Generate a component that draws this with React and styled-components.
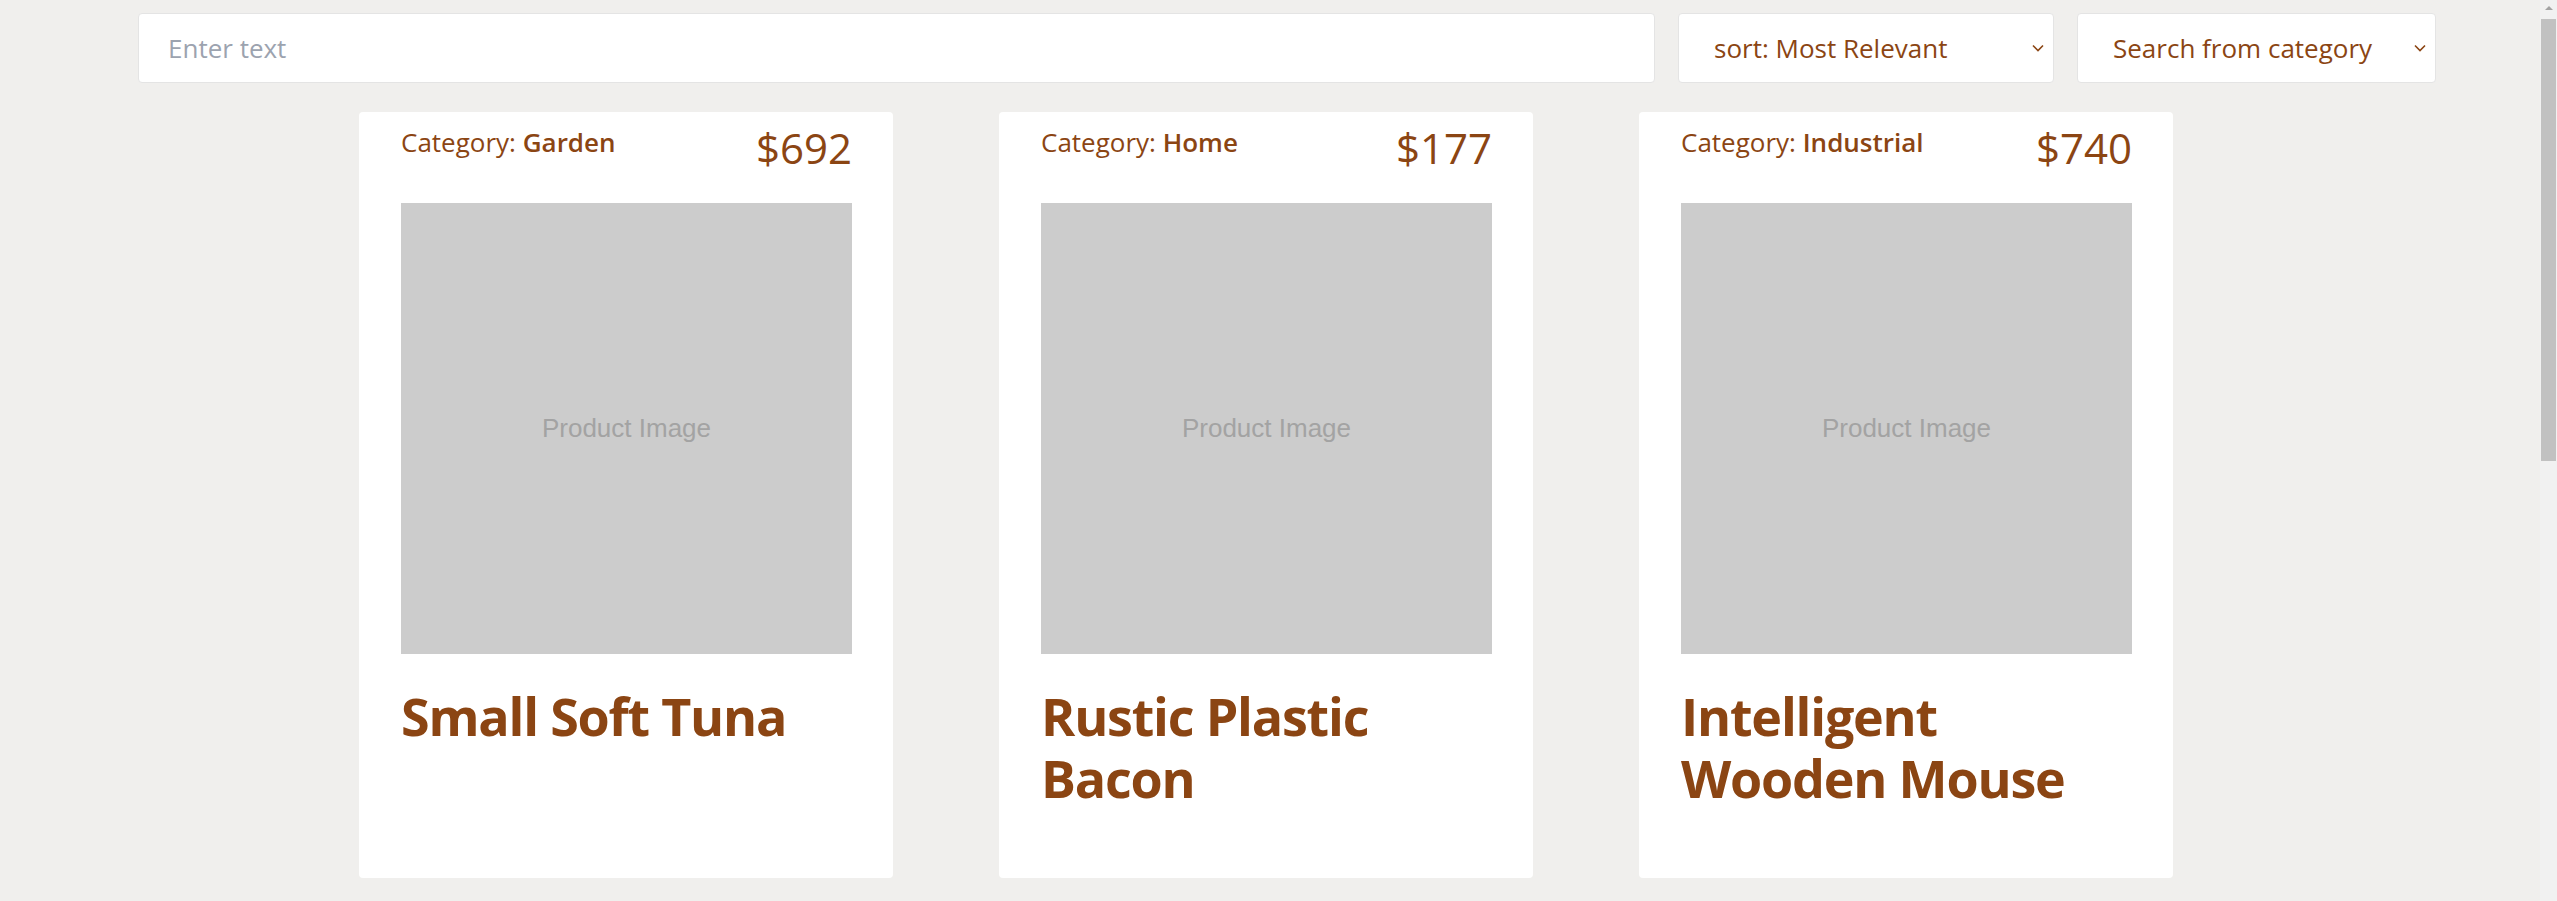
import styled, { createGlobalStyle } from "styled-components"

const GlobalStyle = createGlobalStyle`
  html, body {
    margin: 0;
    padding: 0;
    background: #f0efed;
    font-family: "Open Sans", "Noto Sans", sans-serif;
    color: #8b4513;
    overflow: hidden;
  }
  * {
    box-sizing: border-box;
  }
`

const products = [
  { id: 1, category: "Garden", price: 692, name: "Small Soft Tuna" },
  { id: 2, category: "Home", price: 177, name: "Rustic Plastic Bacon" },
  { id: 3, category: "Industrial", price: 740, name: "Intelligent Wooden Mouse" },
]

const PageWrapper = styled.div`
  padding: 13px 17px 60px 0;
`

const SearchBar = styled.div`
  display: flex;
  gap: 23px;
  padding-left: 138px;
`

const SearchInput = styled.input`
  width: 1517px;
  height: 70px;
  padding: 0 29px;
  border: 1px solid #e4e4e4;
  border-radius: 4px;
  background: #fff;
  font-family: inherit;
  font-size: 26px;
  color: #8b4513;
  outline: none;

  &::placeholder {
    color: #9ca3af;
  }
`

const SelectWrap = styled.div`
  position: relative;
  width: ${(p) => p.$width}px;
  height: 70px;

  svg {
    position: absolute;
    right: 8px;
    top: 30px;
    pointer-events: none;
  }
`

const Select = styled.select`
  appearance: none;
  width: 100%;
  height: 100%;
  padding: 0 30px 0 35px;
  border: 1px solid #e4e4e4;
  border-radius: 4px;
  background: #fff;
  font-family: inherit;
  font-size: 26px;
  color: #8b4513;
  outline: none;
`

const CardGrid = styled.div`
  display: grid;
  grid-template-columns: repeat(3, 534px);
  column-gap: 106px;
  margin: 29px 0 0 359px;
`

const Card = styled.div`
  height: 766px;
  padding: 15px 41px 0 42px;
  background: #fff;
  border-radius: 4px;
`

const CardHeader = styled.div`
  display: flex;
  justify-content: space-between;
  align-items: flex-start;
`

const Category = styled.div`
  margin-top: 2px;
  font-size: 26px;
  line-height: 26px;

  b {
    font-weight: 600;
  }
`

const Price = styled.div`
  font-size: 42px;
  line-height: 42px;
`

const ImageBox = styled.div`
  display: flex;
  align-items: center;
  justify-content: center;
  width: 100%;
  aspect-ratio: 1;
  margin-top: 34px;
  background: #cccccc;
  font-family: "Liberation Sans", Arial, sans-serif;
  font-size: 26px;
  color: #a3a3a3;
`

const Title = styled.h2`
  margin: 31px 0 0;
  font-size: 52px;
  letter-spacing: -1.2px;
  line-height: 62px;
  font-weight: 700;
`

const ScrollTrack = styled.div`
  position: fixed;
  top: 0;
  right: 0;
  width: 17px;
  height: 100vh;
  display: flex;
  flex-direction: column;
  align-items: center;
  background: #f1f1f1;
`

const ScrollArrow = styled.div`
  width: 0;
  height: 0;
  margin: 6px 0 5px;
  border-left: 4px solid transparent;
  border-right: 4px solid transparent;
  border-bottom: 4px solid #a3a3a3;
`

const ScrollThumb = styled.div`
  width: 15px;
  height: 442px;
  margin-top: 4px;
  background: #c1c1c1;
`

const Chevron = () => (
  <svg width="16" height="10" viewBox="0 0 16 10" fill="none">
    <path d="M3 2.5 L8 7.5 L13 2.5" stroke="#8b4513" strokeWidth="1.6" />
  </svg>
)

const App = () => {
  return (
    <PageWrapper>
      <GlobalStyle />
      <SearchBar>
        <SearchInput placeholder="Enter text" />
        <SelectWrap $width={376}>
          <Select defaultValue="relevant">
            <option value="relevant">sort: Most Relevant</option>
            <option value="low">sort: Price Low to High</option>
            <option value="high">sort: Price High to Low</option>
          </Select>
          <Chevron />
        </SelectWrap>
        <SelectWrap $width={359}>
          <Select defaultValue="">
            <option value="">Search from category</option>
            <option value="garden">Garden</option>
            <option value="home">Home</option>
            <option value="industrial">Industrial</option>
          </Select>
          <Chevron />
        </SelectWrap>
      </SearchBar>
      <CardGrid>
        {products.map((item) => (
          <Card key={item.id}>
            <CardHeader>
              <Category>
                Category: <b>{item.category}</b>
              </Category>
              <Price>${item.price}</Price>
            </CardHeader>
            <ImageBox>Product Image</ImageBox>
            <Title>{item.name}</Title>
          </Card>
        ))}
      </CardGrid>
      <ScrollTrack>
        <ScrollArrow />
        <ScrollThumb />
      </ScrollTrack>
    </PageWrapper>
  )
}

export default App
